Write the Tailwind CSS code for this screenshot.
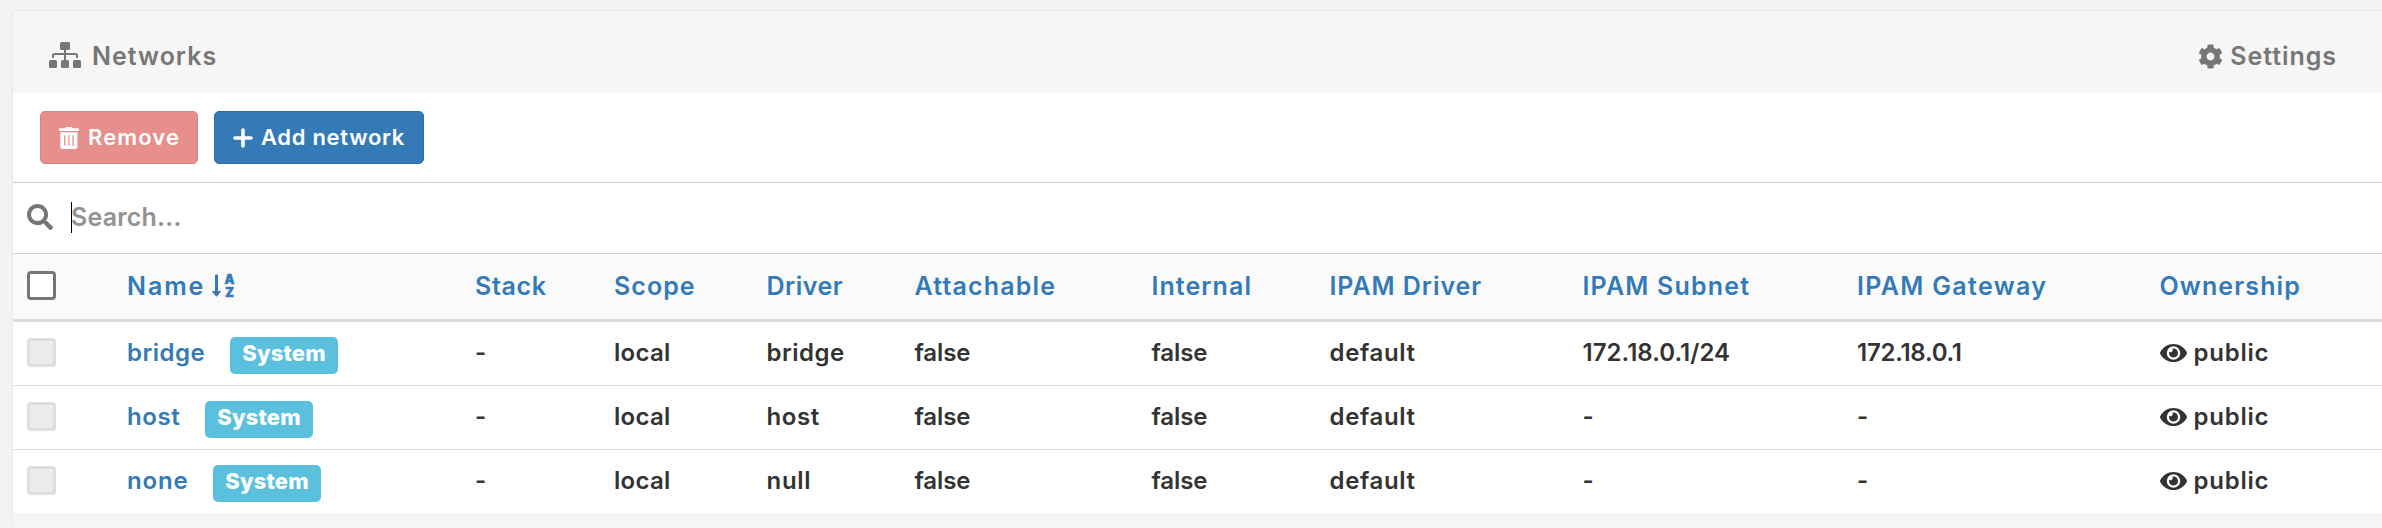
<!DOCTYPE html>
<html lang="en">
<head>
<meta charset="utf-8">
<title>Networks</title>
<script src="https://cdn.jsdelivr.net/npm/@tailwindcss/browser@4"></script>
</head>
<body class="h-[528px] overflow-hidden bg-[#f3f3f3] pt-[10px] pl-3 font-['Inter',sans-serif] text-[24px] font-[560] text-[#333]">
<svg class="hidden">
  <symbol id="eye" viewBox="0 64 576 384"><path fill="currentColor" d="M572.52 241.4C518.29 135.59 410.93 64 288 64S57.68 135.64 3.48 241.41a32.35 32.35 0 0 0 0 29.19C57.71 376.41 165.07 448 288 448s230.32-71.64 284.52-177.41a32.35 32.35 0 0 0 0-29.19zM288 400a144 144 0 1 1 144-144 143.93 143.93 0 0 1-144 144zm0-240a95.31 95.31 0 0 0-25.31 3.79 47.85 47.85 0 0 1-66.9 66.9A95.78 95.78 0 1 0 288 160z"/></symbol>
</svg>
<main class="h-[518px] rounded-tl-[3px] border-t border-l border-[#e8e8e8] bg-[#f5f5f5]">
  <header class="flex h-[82px] items-center justify-between bg-[#f6f6f6] pt-2 pr-[45px] pl-9 text-[25px] font-semibold text-[#767676]">
    <h1 class="flex items-center gap-[11px]">
      <svg class="mb-[2px] h-[26px] w-8" viewBox="0 0 32 26" fill="currentColor"><rect x="11" width="10" height="8" rx="1.5"/><rect y="18" width="8" height="8" rx="1.5"/><rect x="12" y="18" width="8" height="8" rx="1.5"/><rect x="24" y="18" width="8" height="8" rx="1.5"/><path d="M16 7v11M4 16v-2.500q0-1.500 1.500-1.500h21q1.500 0 1.500 1.500V16" fill="none" stroke="currentColor" stroke-width="2"/></svg>
      <span class="pt-[2px] tracking-[1px]">Networks</span>
    </h1>
    <a class="flex items-center gap-[7px]">
      <svg class="size-[25px]" viewBox="0 0 512 512" fill="currentColor"><path d="M487.4 315.7l-42.6-24.6c4.3-23.2 4.3-47 0-70.2l42.6-24.6c4.900-2.800 7.100-8.600 5.500-14-11.100-35.600-30-67.800-54.700-94.600-3.800-4.100-10-5.100-14.800-2.300L380.8 110c-17.900-15.400-38.500-27.300-60.800-35.100V25.800c0-5.600-3.900-10.500-9.400-11.700-36.700-8.200-74.300-7.800-109.200 0-5.500 1.200-9.400 6.100-9.400 11.700V75c-22.200 7.900-42.800 19.800-60.800 35.100L88.700 85.500c-4.900-2.800-11-1.900-14.800 2.300-24.700 26.700-43.600 58.900-54.700 94.600-1.700 5.400.6 11.200 5.500 14L67.300 221c-4.300 23.200-4.300 47 0 70.200l-42.600 24.600c-4.900 2.800-7.100 8.600-5.500 14 11.100 35.600 30 67.800 54.700 94.600 3.800 4.100 10 5.100 14.800 2.300l42.600-24.600c17.900 15.400 38.500 27.300 60.800 35.100v49.200c0 5.600 3.900 10.500 9.400 11.700 36.700 8.200 74.300 7.800 109.200 0 5.500-1.200 9.400-6.100 9.400-11.700v-49.200c22.200-7.900 42.800-19.800 60.800-35.100l42.600 24.600c4.900 2.800 11 1.900 14.800-2.300 24.700-26.700 43.600-58.900 54.700-94.600 1.500-5.500-.7-11.300-5.600-14.100zM256 336c-44.100 0-80-35.900-80-80s35.900-80 80-80 80 35.900 80 80-35.900 80-80 80z"/></svg>
      <span class="pt-[2px] tracking-[0.950px]">Settings</span>
    </a>
  </header>

  <div class="flex h-[90px] gap-4 border-b border-[#d0d0d0] bg-white pt-[18px] pl-[27px] text-[22px] font-semibold text-white">
    <button class="flex h-[53px] w-[158px] items-center gap-[9px] rounded-[5px] border border-[#e07f7c] bg-[#e68f8c] pl-[18px]">
      <svg class="h-[22px] w-5" viewBox="0 0 20 22" fill="currentColor"><path d="M.8 1.200H6L7.200 0h5.600L14 1.200h5.200q.8 0 .8.800v1.200q0 .8-.8.800H.8Q0 4 0 3.200V2q0-.8.8-.8z"/><path fill-rule="evenodd" d="M1.300 5.300h17.200V20q0 2-2 2H3.300q-2 0-2-2zM5.100 8.200v10.600h1.300V8.200zM9.300 8.200v10.600h1.300V8.200zM13.400 8.200v10.600h1.300V8.200z"/></svg>
      <span class="tracking-[1.12px]">Remove</span>
    </button>
    <button class="flex h-[53px] w-[210px] items-center gap-[8px] rounded-[5px] border border-[#2e6da4] bg-[#337ab7] pl-[18px]">
      <svg class="size-5" viewBox="0 0 20 20" fill="none" stroke="currentColor" stroke-width="3.600" stroke-linecap="round"><path d="M10 2v16M2 10h16"/></svg>
      <span class="tracking-[0.690px]">Add network</span>
    </button>
  </div>

  <div class="flex h-[71px] items-center border-b border-[#d0d0d0] bg-white pb-[2px] pl-[14px] text-[25px]">
    <svg class="size-[26px] text-[#767676]" viewBox="0 0 512 512" fill="currentColor"><path d="M505 442.700L405.300 343c-4.500-4.500-10.600-7-17-7H372c27.600-35.300 44-79.700 44-128C416 93.100 322.900 0 208 0S0 93.100 0 208s93.100 208 208 208c48.300 0 92.700-16.400 128-44v16.300c0 6.400 2.500 12.500 7 17l99.700 99.700c9.400 9.400 24.600 9.400 33.900 0l28.300-28.300c9.400-9.400 9.400-24.600.1-34zM208 336c-70.700 0-128-57.200-128-128 0-70.700 57.200-128 128-128 70.700 0 128 57.200 128 128 0 70.700-57.200 128-128 128z"/></svg>
    <span class="ml-[18px] h-[31px] w-px bg-black"></span>
    <span class="-ml-px pt-[2px] tracking-[0.200px] text-[#929292]">Search...</span>
  </div>

  <div class="grid h-[68px] grid-cols-[101px_347px_139px_152.500px_148px_237px_178px_253px_274.500px_302.500px_1fr] items-center border-b-[3px] border-[#ddd] bg-[#fafafa] pl-[14px] text-[25px] font-semibold whitespace-nowrap text-[#337ab7]">
    <span class="mb-[2px] size-[29px] rounded-[4px] border-[3px] border-[#767676] bg-white"></span>
    <span class="-ml-px flex items-center gap-[7px]"><span class="tracking-[1.900px]">Name</span>
      <svg class="mb-[2px] h-[23px] w-[23px] overflow-visible" viewBox="0 0 23 23" fill="currentColor"><path d="M3 1.200Q3 .5 3.700 .5h1.600Q6 .5 6 1.200V17h2.500q.9 0 .3.800l-3.700 4.400q-.6.600-1.200 0L.2 17.800Q-.4 17 .5 17H3z"/><text x="17.500" y="10" text-anchor="middle" font-size="12.500" font-weight="900" letter-spacing="0" stroke="currentColor" stroke-width=".5">A</text><text x="17.500" y="22.500" text-anchor="middle" font-size="12.500" font-weight="900" stroke="currentColor" stroke-width=".5">Z</text></svg>
    </span>
    <span class="tracking-[0.650px]">Stack</span>
    <span class="tracking-[1.030px]">Scope</span>
    <span class="tracking-[0.500px]">Driver</span>
    <span class="tracking-[1.160px]">Attachable</span>
    <span class="tracking-[1.070px]">Internal</span>
    <span class="tracking-[0.950px]">IPAM Driver</span>
    <span class="tracking-[1.200px]">IPAM Subnet</span>
    <span class="tracking-[1.330px]">IPAM Gateway</span>
    <span class="tracking-[1.120px]">Ownership</span>
  </div>

  <div class="grid h-16 grid-cols-[101px_347px_139px_152.500px_148px_237px_178px_253px_274.500px_302.500px_1fr] items-center border-b border-[#ddd] bg-white pb-[2px] pl-[14px] whitespace-nowrap">
    <span class="size-[29px] rounded-[4px] border-[3px] border-[#ddd] bg-[#ebebeb]"></span>
    <span class="flex items-center"><a class="-ml-px w-[103px] tracking-[0.500px] text-[#337ab7]">bridge</a><span class="mt-[6px] flex h-[37px] w-[108px] justify-center rounded-[5px] bg-[#5bc0de] text-[22px] leading-[32px] font-extrabold tracking-[0.150px] text-white">System</span></span>
    <span>-</span>
    <span class="tracking-[0.300px]">local</span>
    <span class="tracking-[0.500px]">bridge</span>
    <span class="tracking-[-0.100px]">false</span>
    <span class="tracking-[-0.100px]">false</span>
    <span class="tracking-[0.650px]">default</span>
    <span class="tracking-[0.050px]">172.18.0.1/24</span>
    <span class="tracking-[-0.250px]">172.18.0.1</span>
    <span class="flex items-center gap-[7px]"><svg class="h-[18px] w-[27px]"><use href="#eye"/></svg><span class="tracking-[0.750px]">public</span></span>
  </div>

  <div class="grid h-16 grid-cols-[101px_347px_139px_152.500px_148px_237px_178px_253px_274.500px_302.500px_1fr] items-center border-b border-[#ddd] bg-white pb-[2px] pl-[14px] whitespace-nowrap">
    <span class="size-[29px] rounded-[4px] border-[3px] border-[#ddd] bg-[#ebebeb]"></span>
    <span class="flex items-center"><a class="-ml-px w-[78px] tracking-[0.550px] text-[#337ab7]">host</a><span class="mt-[6px] flex h-[37px] w-[108px] justify-center rounded-[5px] bg-[#5bc0de] text-[22px] leading-[32px] font-extrabold tracking-[0.150px] text-white">System</span></span>
    <span>-</span>
    <span class="tracking-[0.300px]">local</span>
    <span class="tracking-[0.550px]">host</span>
    <span class="tracking-[-0.100px]">false</span>
    <span class="tracking-[-0.100px]">false</span>
    <span class="tracking-[0.650px]">default</span>
    <span>-</span>
    <span>-</span>
    <span class="flex items-center gap-[7px]"><svg class="h-[18px] w-[27px]"><use href="#eye"/></svg><span class="tracking-[0.750px]">public</span></span>
  </div>

  <div class="grid h-[63px] grid-cols-[101px_347px_139px_152.500px_148px_237px_178px_253px_274.500px_302.500px_1fr] items-center bg-white pb-[2px] pl-[14px] whitespace-nowrap">
    <span class="size-[29px] rounded-[4px] border-[3px] border-[#ddd] bg-[#ebebeb]"></span>
    <span class="flex items-center"><a class="-ml-px w-[86px] tracking-[0.850px] text-[#337ab7]">none</a><span class="mt-[6px] flex h-[37px] w-[108px] justify-center rounded-[5px] bg-[#5bc0de] text-[22px] leading-[32px] font-extrabold tracking-[0.150px] text-white">System</span></span>
    <span>-</span>
    <span class="tracking-[0.300px]">local</span>
    <span class="tracking-[0.700px]">null</span>
    <span class="tracking-[-0.100px]">false</span>
    <span class="tracking-[-0.100px]">false</span>
    <span class="tracking-[0.650px]">default</span>
    <span>-</span>
    <span>-</span>
    <span class="flex items-center gap-[7px]"><svg class="h-[18px] w-[27px]"><use href="#eye"/></svg><span class="tracking-[0.750px]">public</span></span>
  </div>
</main>
</body>
</html>
